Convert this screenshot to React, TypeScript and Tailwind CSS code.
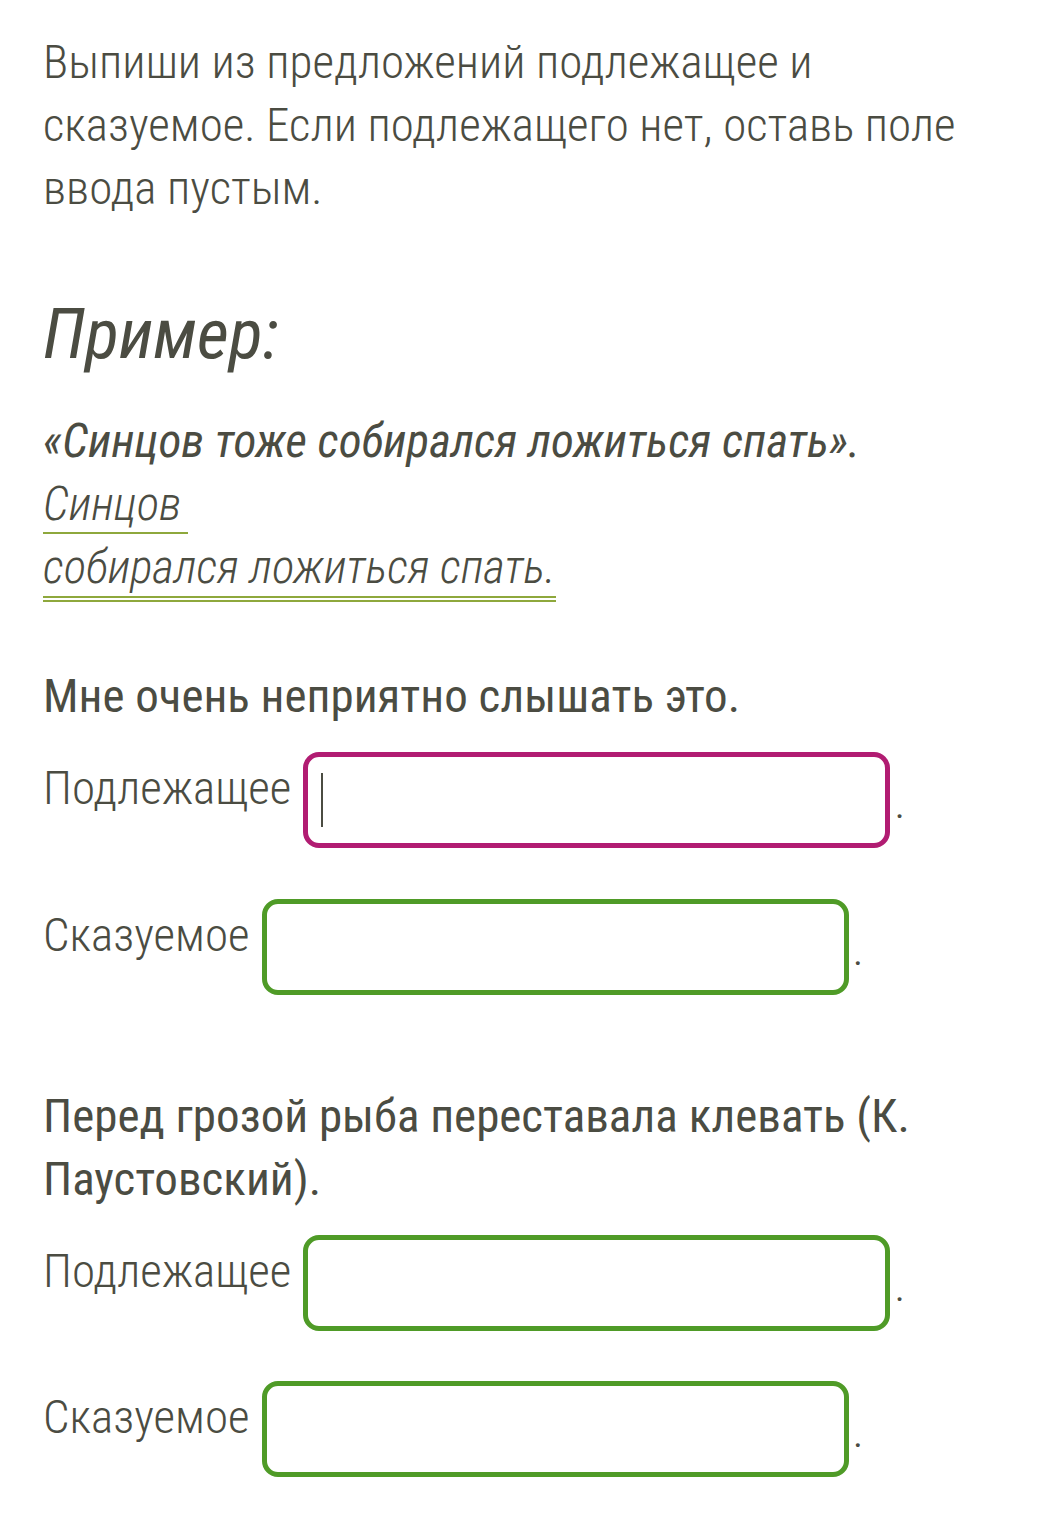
import React from 'react';

const ink = 'text-[#4b4c42]';

function AnswerRow({ label, color, caret }: { label: string; color: 'pink' | 'green'; caret?: boolean }) {
  const border = color === 'pink' ? 'border-[#b11c72]' : 'border-[#4f9b27]';
  return (
    <div className="flex items-start">
      <span className={`mt-[4px] mr-[12px] text-[47px] leading-[63px] font-light ${ink}`}>{label}</span>
      <div className={`flex h-[96px] w-[587px] items-center rounded-[16px] border-[5px] bg-white pl-[13px] ${border}`}>
        {caret && <span className="h-[54px] w-[2px] bg-[#4b4c42]" />}
      </div>
      <span className={`mt-[18px] ml-[4px] text-[47px] leading-[63px] font-light ${ink}`}>.</span>
    </div>
  );
}

export default function App() {
  return (
    <div
      className={`min-h-screen bg-white px-[43px] pt-[30px] pb-[40px] font-stretch-condensed ${ink}`}
      style={{ fontFamily: 'Roboto, "Liberation Sans", sans-serif' }}
    >
      <p className="text-[47px] leading-[63px] font-light">
        Выпиши из предложений подлежащее и сказуемое. Если подлежащего нет, оставь поле ввода пустым.
      </p>

      <h2 className="mt-[75px] text-[70px] leading-[80px] italic font-normal">Пример:</h2>

      <div className="mt-[35px] text-[47px] leading-[63px] italic">
        <div className="font-normal">«Синцов тоже собирался ложиться спать».</div>
        <div className="font-light">
          <span className="inline-block border-b-2 border-[#8ea83c] leading-[57px] pr-[6px]">Синцов</span>
        </div>
        <div className="font-light">
          <span className="inline-block border-b-[6px] border-double border-[#8ea83c] leading-[58px]">собирался ложиться спать.</span>
        </div>
      </div>

      <p className="mt-[62px] text-[47px] leading-[63px] font-normal">Мне очень неприятно слышать это.</p>

      <div className="mt-[25px] flex flex-col gap-[51px]">
        <AnswerRow label="Подлежащее" color="pink" caret />
        <AnswerRow label="Сказуемое" color="green" />
      </div>

      <p className="mt-[89px] text-[47px] leading-[63px] font-normal">
        Перед грозой рыба переставала клевать (К. Паустовский).
      </p>

      <div className="mt-[25px] flex flex-col gap-[50px]">
        <AnswerRow label="Подлежащее" color="green" />
        <AnswerRow label="Сказуемое" color="green" />
      </div>
    </div>
  );
}
